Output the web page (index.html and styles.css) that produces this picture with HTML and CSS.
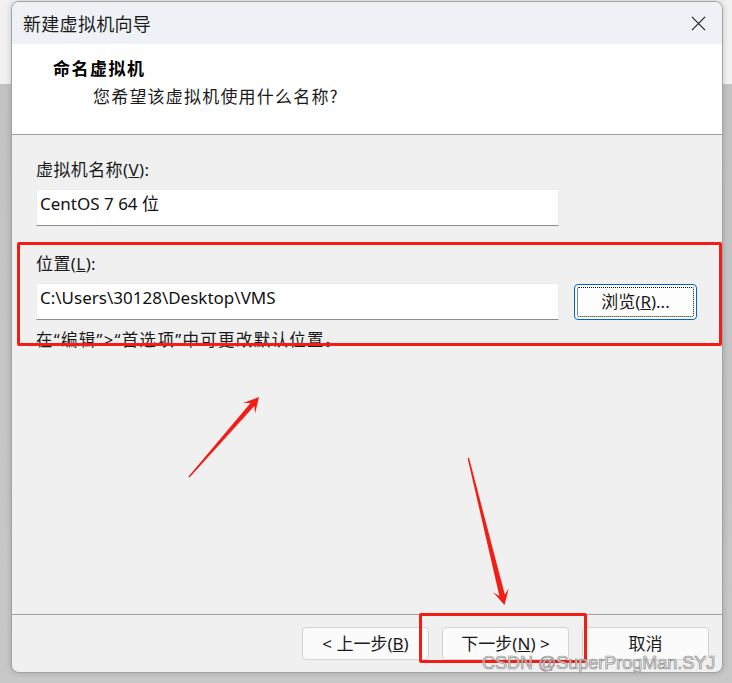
FILE: index.html
```html
<!DOCTYPE html>
<html lang="zh-CN">
<head>
<meta charset="utf-8">
<title>新建虚拟机向导</title>
<link rel="stylesheet" href="styles.css">
</head>
<body>
<div class="window">
  <div class="titlebar">
    <span class="title">新建虚拟机向导</span>
    <svg class="close" width="16" height="16" viewBox="0 0 16 16"><path d="M1 1 L15 15 M15 1 L1 15" stroke="#1b1b1b" stroke-width="1.2" fill="none"/></svg>
  </div>
  <div class="header">
    <div class="h-title">命名虚拟机</div>
    <div class="h-sub">您希望该虚拟机使用什么名称?</div>
  </div>
  <div class="content">
    <div class="label">虚拟机名称(<u>V</u>):</div>
    <div class="row"><div class="input">CentOS 7 64 位</div></div>
    <div class="label label2">位置(<u>L</u>):</div>
    <div class="row">
      <div class="input">C:\Users\30128\Desktop\VMS</div>
      <div class="browse"><span class="focus">浏览(<u>R</u>)...</span></div>
    </div>
    <div class="hint">在“编辑”&gt;“首选项”中可更改默认位置。</div>
  </div>
  <div class="footer">
    <div class="btn">&lt; 上一步(<u>B</u>)</div>
    <div class="btn">下一步(<u>N</u>) &gt;</div>
    <div class="btn">取消</div>
  </div>
</div>
<div class="annot box1"></div>
<div class="annot box2"></div>
<svg class="arrows" width="732" height="683" viewBox="0 0 732 683">
  <polygon fill="#f21d14" points="188.5,476.6 250.5,402.9 243.1,403.0 259,397 255.1,413.6 254.3,406.1 189.5,477.4"/>
  <polygon fill="#f21d14" points="467.6,458.2 499.4,596.0 493.1,592.3 504.5,605 508.7,588.5 504.8,594.6 469.0,457.8"/>
</svg>
<div class="watermark">CSDN @SuperProgMan.SYJ</div>
</body>
</html>
```

FILE: styles.css
```css
html, body {
  margin: 0;
  padding: 0;
}
body {
  width: 732px;
  height: 683px;
  overflow: hidden;
  background: linear-gradient(to bottom, #f1f1f1 0, #f1f1f1 84px, #c3c3c3 84px, #c8c8c8 683px);
  font-family: "Noto Sans", "Noto Sans CJK SC", sans-serif;
  color: #1a1a1a;
  position: relative;
}
.window {
  box-sizing: border-box;
  margin: 1px 0 0 11px;
  width: 712px;
  height: 672px;
  border: 1px solid #a3a3a3;
  border-radius: 8px;
  background: #f0f0f0;
  overflow: hidden;
  display: flex;
  flex-direction: column;
  box-shadow: 0 0 6px rgba(0, 0, 0, 0.18);
}
.titlebar {
  height: 42px;
  flex: none;
  background: #eef2f6;
  display: flex;
  align-items: center;
  justify-content: space-between;
  padding: 0 16px 0 11px;
}
.title {
  font-family: "Noto Sans CJK SC", sans-serif;
  font-size: 18px;
  letter-spacing: 0.3px;
  color: #1a1a1a;
  line-height: 24px;
}
.close {
  width: 15px;
  height: 15px;
}
.header {
  flex: none;
  background: #ffffff;
  border-bottom: 1px solid #a0a0a0;
  box-sizing: border-box;
  height: 91px;
  padding: 12px 0 0 41px;
}
.h-title {
  font-family: "Noto Sans CJK SC", sans-serif;
  font-weight: bold;
  font-size: 17px;
  line-height: 24px;
  letter-spacing: 1.5px;
  color: #000;
}
.h-sub {
  font-family: "Noto Sans CJK SC", sans-serif;
  font-size: 17px;
  line-height: 24px;
  margin-top: 4px;
  padding-left: 40px;
  letter-spacing: 1.2px;
  color: #1a1a1a;
}
.content {
  flex: 1;
  padding: 23px 0 0 24px;
}
.label {
  font-size: 17px;
  line-height: 24px;
  margin-bottom: 7px;
  letter-spacing: 0.4px;
}
.label2 {
  margin-top: 26px;
}
.row {
  display: flex;
  align-items: center;
  gap: 15px;
}
.input {
  box-sizing: border-box;
  width: 523px;
  height: 37px;
  background: #ffffff;
  border: 1px solid #ececec;
  border-bottom: 1px solid #8c8c8c;
  padding: 2px 0 0 3px;
  font-size: 17px;
  line-height: 24px;
  color: #111;
}
.browse {
  box-sizing: border-box;
  width: 123px;
  height: 36px;
  border: 1px solid #0067c0;
  border-radius: 4px;
  background: #fdfdfd;
  padding: 2px;
  display: flex;
}
.focus {
  flex: 1;
  border: 1px dotted #111;
  border-radius: 2px;
  display: flex;
  align-items: center;
  justify-content: center;
  font-size: 17px;
  line-height: 24px;
}
.hint {
  margin-top: 8px;
  font-size: 16.5px;
  line-height: 24px;
  letter-spacing: 1.3px;
}
.footer {
  flex: none;
  height: 58px;
  box-sizing: border-box;
  border-top: 1px solid #a0a0a0;
  display: flex;
  justify-content: flex-end;
  align-items: flex-start;
  gap: 13px;
  padding: 12px 13px 0 0;
}
.btn {
  box-sizing: border-box;
  width: 127px;
  height: 33px;
  border: 1px solid #d3d3d3;
  border-radius: 4px;
  background: #fbfbfb;
  display: flex;
  align-items: center;
  justify-content: center;
  font-size: 17px;
  line-height: 20px;
}
.annot {
  position: absolute;
  box-sizing: border-box;
  border: 3px solid #f21d14;
  border-radius: 2px;
}
.box1 {
  left: 17px;
  top: 242px;
  width: 705px;
  height: 104px;
}
.box2 {
  left: 419px;
  top: 613px;
  width: 168px;
  height: 50px;
}
.arrows {
  position: absolute;
  left: 0;
  top: 0;
}
.watermark {
  position: absolute;
  left: 482px;
  top: 655px;
  font-family: "Liberation Sans", sans-serif;
  font-size: 18px;
  line-height: 16px;
  color: rgba(235, 235, 235, 0.85);
  -webkit-text-stroke: 0.7px #8e8e8e;
  white-space: nowrap;
}
```
